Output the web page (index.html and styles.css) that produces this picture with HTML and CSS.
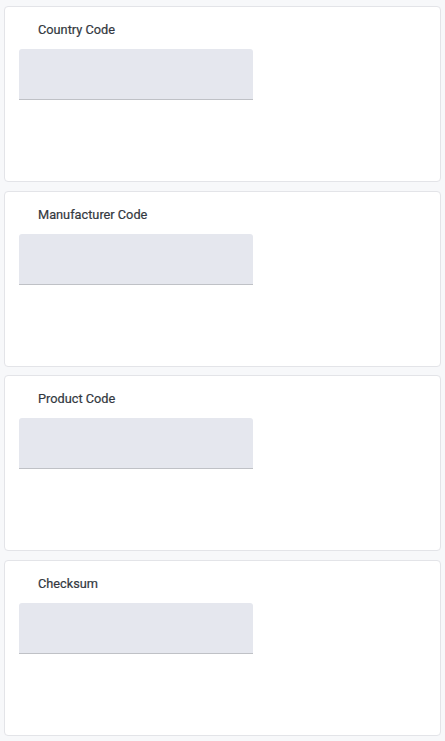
FILE: index.html
```html
<!DOCTYPE html>
<html>
<head>
<meta charset="utf-8">
<link rel="stylesheet" href="styles.css">
</head>
<body>
<div class="list">
  <section class="card">
    <div class="label">Country Code</div>
    <div class="field"></div>
  </section>
  <section class="card">
    <div class="label">Manufacturer Code</div>
    <div class="field"></div>
  </section>
  <section class="card">
    <div class="label">Product Code</div>
    <div class="field"></div>
  </section>
  <section class="card">
    <div class="label">Checksum</div>
    <div class="field"></div>
  </section>
</div>
</body>
</html>
```
FILE: styles.css
```css
html, body {
  margin: 0;
  padding: 0;
  background: #f7f8fa;
  font-family: Roboto, "Liberation Sans", sans-serif;
}
.list {
  display: flex;
  flex-direction: column;
  gap: 8.67px;
  padding: 6px 4px 5px 4px;
}
.card {
  box-sizing: border-box;
  height: 176px;
  background: #ffffff;
  border: 1px solid #e3e4e8;
  border-radius: 4px;
  padding: 15px 14px 0 14px;
}
.label {
  font-size: 12.75px;
  font-weight: 400;
  color: #333840;
  line-height: 16px;
  padding-left: 19px;
  height: 27px;
  -webkit-text-stroke: 0.2px #333840;
}
.field {
  width: 234px;
  height: 50px;
  background: #e5e7ee;
  border-bottom: 1px solid #bfc1c6;
  border-radius: 3px 3px 0 0;
}
```
